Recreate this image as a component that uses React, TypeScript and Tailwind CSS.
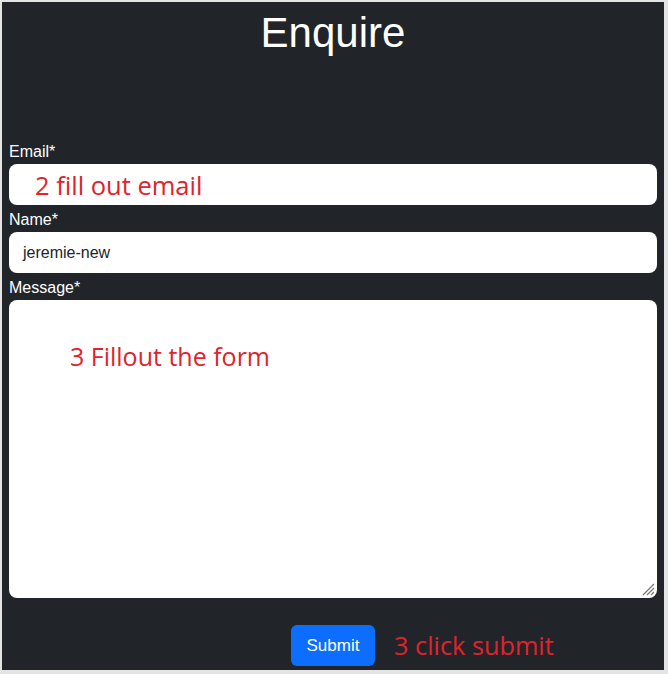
export default function App() {
  return (
    <div className="w-[668px] h-[674px] bg-[#e4e4e4] pt-[2px] pl-[2px] pr-[4px] pb-[4px]">
      <div className="h-full bg-[#212529] px-[7px] font-['Liberation_Sans',Arial,sans-serif] text-white">
        <h1 className="text-center text-[42px] leading-[58px] pt-[2px]">Enquire</h1>

        <form className="mt-[80px] flex flex-col">
          <label className="text-[16px] leading-[20px]">Email*</label>
          <div className="mt-[2px] h-[41px] rounded-[8px] bg-white flex items-center pl-[26px]">
            <span className="font-['Open_Sans','Noto_Sans',sans-serif] text-[25.5px] text-[#e0232c] translate-y-[1px]">2 fill out email</span>
          </div>

          <label className="mt-[5px] text-[16px] leading-[20px]">Name*</label>
          <div className="mt-[2px] h-[41px] rounded-[8px] bg-white flex items-center pl-[14px] text-[16px] text-[#212529]">
            jeremie-new
          </div>

          <label className="mt-[5px] text-[16px] leading-[20px]">Message*</label>
          <div className="relative mt-[2px] h-[298px] rounded-[8px] bg-white pl-[61px] pt-[38px]">
            <span className="font-['Open_Sans','Noto_Sans',sans-serif] text-[25px] text-[#e0232c]">3 Fillout the form</span>
            <svg className="absolute right-[2px] bottom-[2px]" width="14" height="14" viewBox="0 0 14 14">
              <path d="M13 2 L2 13 M13 6 L6 13 M13 10 L10 13" stroke="#777" strokeWidth="1.2" />
            </svg>
          </div>

          <div className="mt-[27px] flex items-center pl-[282px] gap-[19px]">
            <button type="button" className="h-[41px] w-[84px] rounded-[6px] bg-[#0d6efd] text-white text-[17px]">
              Submit
            </button>
            <span className="font-['Open_Sans','Noto_Sans',sans-serif] text-[25.3px] text-[#e0232c]">3 click submit</span>
          </div>
        </form>
      </div>
    </div>
  )
}
